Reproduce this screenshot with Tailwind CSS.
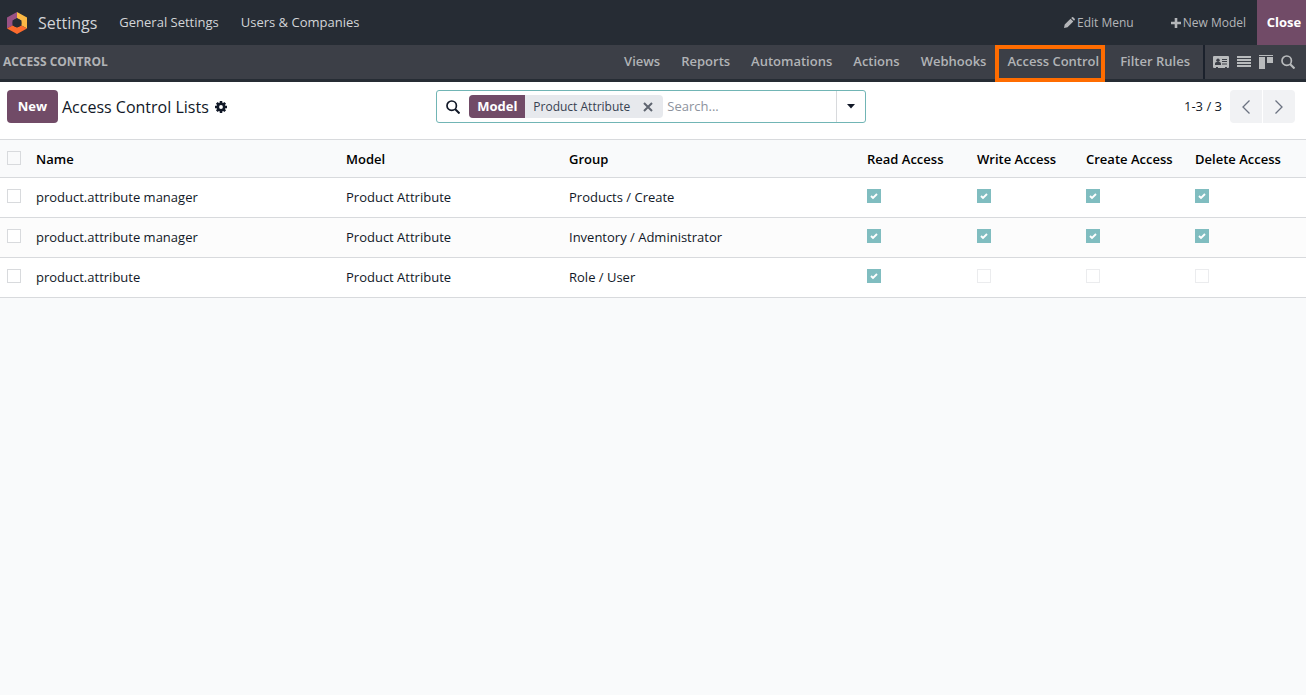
<!DOCTYPE html>
<html lang="en">
<head>
    <meta charset="UTF-8">
    <meta name="viewport" content="width=device-width, initial-scale=1.0">
    <title>Settings - Access Control Lists</title>
    <script src="https://cdn.jsdelivr.net/npm/@tailwindcss/browser@4"></script>
</head>
<body class="min-h-screen bg-[#f9fafb] font-['Segoe_UI','Open_Sans',sans-serif] text-[13px] text-[#111827]">
    <!-- Shared check mark -->
    <svg class="hidden">
        <symbol id="check" viewBox="0 0 14 14">
            <path d="M4 7l2 2 4-4" fill="none" stroke="#fff" stroke-width="1.9" />
        </symbol>
    </svg>

    <!-- Main navbar -->
    <nav class="flex h-[45px] items-center bg-[#262c34] text-[#d3d5d8]">
        <a href="#" class="flex items-center pl-[7px]">
            <svg class="h-[22px] w-5" viewBox="0 0 20 22">
                <path d="M10 0L0 5.500v11l5.500-3V8.500L10 6z" fill="#985184" />
                <path d="M10 0l10 5.500v11l-5.500-3V8.500L10 6z" fill="#fbb945" />
                <path d="M0 16.500l5.500-3L10 15.500l4.500-2 5.500 3L10 22z" fill="#fc6b2d" />
                <circle cx="10" cy="11" r="4.300" fill="#262c34" />
            </svg>
            <span class="ml-[11px] text-base">Settings</span>
        </a>
        <a href="#" class="ml-[22px]">General Settings</a>
        <a href="#" class="ml-[22px]">Users &amp; Companies</a>
        <div class="ml-auto flex h-full items-center text-xs text-[#b4b6b9]">
            <a href="#" class="flex items-center gap-[2px]">
                <svg class="size-[11px]" viewBox="0 0 11 11" fill="currentColor">
                    <path d="M0 11l.7-3.500L6.500 1.700l2.800 2.800-5.800 5.800zM7.200 1L8 .3q.6-.5 1.200 0l1.500 1.500q.5.600 0 1.200l-.7.800z" />
                </svg>
                Edit Menu
            </a>
            <a href="#" class="ml-[37px] flex items-center gap-[2px]">
                <svg class="size-[10px]" viewBox="0 0 10 10" fill="currentColor"><path d="M3.700 0h2.600v3.700H10v2.600H6.300V10H3.700V6.300H0V3.700h3.700z" /></svg>
                New Model
            </a>
            <button class="ml-[11px] h-full w-[49px] bg-[#714b67] pl-[5px] text-[13px] font-bold text-white">Close</button>
        </div>
    </nav>

    <!-- Studio bar -->
    <nav class="flex h-[37px] items-stretch border-b-[3px] border-[#262c34] bg-[#3c3f47] font-semibold text-[#b1b3b6]">
        <h2 class="self-center pl-[3px] text-xs font-bold">ACCESS CONTROL</h2>
        <div class="ml-auto flex items-center gap-[21px] pr-[13px]">
            <a href="#">Views</a>
            <a href="#">Reports</a>
            <a href="#">Automations</a>
            <a href="#">Actions</a>
            <a href="#">Webhooks</a>
            <a href="#" class="relative">
                Access Control
                <span class="absolute -top-[7px] -right-[6px] -bottom-[10px] -left-3 border-4 border-[#ff6c00]"></span>
            </a>
            <a href="#">Filter Rules</a>
        </div>
        <div class="flex items-center gap-2 border-l-2 border-[#1b212c] pr-[11px] pl-2">
            <button aria-label="Form">
                <svg class="h-3 w-4" viewBox="0 0 16 12">
                    <path d="M1 0h14q1 0 1 1v10q0 1-1 1h-1v-1h-2v1H5v-1H3v1H1q-1 0-1-1V1q0-1 1-1z" fill="#b9bbbd" />
                    <path d="M2 9V7.500Q2 6 3.500 6h3Q8 6 8 7.500V9zM9 3h5v1H9zM9 5h5v1H9zM9 7.500h5v1H9z" fill="#3c3f47" />
                    <circle cx="5" cy="4.200" r="1.700" fill="#3c3f47" />
                </svg>
            </button>
            <button aria-label="List">
                <svg class="h-3 w-[14px]" viewBox="0 0 14 12" fill="#b9bbbd"><path d="M0 0h14v2H0zM0 3h14v2H0zM0 6h14v2H0zM0 9h14v2H0z" /></svg>
            </button>
            <button aria-label="Kanban">
                <svg class="h-[14px] w-[14px]" viewBox="0 0 14 14" fill="#b9bbbd"><path d="M0 0h14v1H0zM0 2h6v12H0zM8 2h6v6H8z" /></svg>
            </button>
            <button aria-label="Search view">
                <svg class="size-[14px]" viewBox="0 0 14 14" fill="none" stroke="#b9bbbd" stroke-width="1.700"><circle cx="5.700" cy="5.700" r="4.700" /><path d="M9 9l4.500 4.500" stroke-width="2.200" /></svg>
            </button>
        </div>
    </nav>

    <!-- Control panel -->
    <header class="grid grid-cols-3 items-center border-b border-[#d8dadd] bg-white pt-2 pr-[11px] pb-4 pl-[7px]">
        <div class="flex items-center">
            <button class="h-[33px] w-[51px] rounded bg-[#714b67] font-bold text-white">New</button>
            <h1 class="ml-1 text-base">Access Control Lists</h1>
            <button class="ml-[6px]" aria-label="Actions">
                <svg class="size-3" viewBox="0 0 12 12">
                    <circle cx="6" cy="6" r="3.200" fill="none" stroke="#111827" stroke-width="2.600" />
                    <path d="M6 0v2.500M6 9.500V12M0 6h2.500M9.500 6H12M1.800 1.800l1.700 1.700M8.500 8.500l1.700 1.700M1.800 10.200l1.700-1.700M8.500 3.500l1.700-1.700" stroke="#111827" stroke-width="2.500" />
                </svg>
            </button>
        </div>
        <div class="flex h-[33px] items-center rounded-[3px] border border-[#71b5b5]">
            <svg class="ml-[9px] size-[14px] shrink-0" viewBox="0 0 14 14" fill="none" stroke="#111827" stroke-width="1.700"><circle cx="5.700" cy="5.700" r="4.700" /><path d="M9 9l4.500 4.500" stroke-width="2" /></svg>
            <div class="ml-[9px] flex h-[23px] shrink-0 items-center overflow-hidden rounded bg-[#e7e9ed]">
                <span class="flex h-full w-14 items-center justify-center bg-[#714b67] font-bold text-white">Model</span>
                <span class="ml-2 text-xs text-[#374151]">Product Attribute</span>
                <button class="mr-[10px] ml-[13px]" aria-label="Remove">
                    <svg class="size-[10px]" viewBox="0 0 10 10" stroke="#5f6570" stroke-width="2"><path d="M1 1l8 8M9 1L1 9" /></svg>
                </button>
            </div>
            <input type="text" aria-label="Search" placeholder="Search..." class="ml-1 min-w-0 flex-1 outline-none placeholder:text-[#8d939d]">
            <button class="flex h-full w-[29px] items-center justify-center border-l border-[#d8dadd]" aria-label="Toggle search panel">
                <svg class="h-[5px] w-2" viewBox="0 0 8 5"><path d="M0 0h8L4 4.500z" fill="#111827" /></svg>
            </button>
        </div>
        <div class="flex items-center justify-end gap-px">
            <span class="mr-[7px]">1-3 / 3</span>
            <button class="flex h-[33px] w-8 items-center justify-center rounded-l bg-[#f1f2f4]" aria-label="Previous">
                <svg class="h-[14px] w-2" viewBox="0 0 8 14" fill="none" stroke="#6b7280" stroke-width="1.300"><path d="M7.500.500L1 7l6.500 6.500" /></svg>
            </button>
            <button class="flex h-[33px] w-8 items-center justify-center rounded-r bg-[#f1f2f4]" aria-label="Next">
                <svg class="h-[14px] w-2" viewBox="0 0 8 14" fill="none" stroke="#6b7280" stroke-width="1.300"><path d="M.500.500L7 7 .500 13.500" /></svg>
            </button>
        </div>
    </header>

    <!-- Access rights list -->
    <table class="w-full table-fixed text-left">
        <colgroup>
            <col class="w-9">
            <col class="w-[310px]">
            <col class="w-[223px]">
            <col>
            <col class="w-[110px]">
            <col class="w-[109px]">
            <col class="w-[109px]">
            <col class="w-[111px]">
        </colgroup>
        <thead>
            <tr class="h-[37px] border-b border-[#d8dadd] text-black">
                <th class="pl-[7px]"><input type="checkbox" aria-label="Select all" class="block size-[14px] appearance-none border border-[#d8dadd]"></th>
                <th class="pt-[2px] font-semibold">Name</th>
                <th class="pt-[2px] font-semibold">Model</th>
                <th class="pt-[2px] font-semibold">Group</th>
                <th class="pt-[2px] font-semibold">Read Access</th>
                <th class="pt-[2px] font-semibold">Write Access</th>
                <th class="pt-[2px] font-semibold">Create Access</th>
                <th class="pt-[2px] font-semibold">Delete Access</th>
            </tr>
        </thead>
        <tbody id="rows"></tbody>
    </table>

    <script>
        const records = [
            { name: 'product.attribute manager', model: 'Product Attribute', group: 'Products / Create', access: [true, true, true, true] },
            { name: 'product.attribute manager', model: 'Product Attribute', group: 'Inventory / Administrator', access: [true, true, true, true] },
            { name: 'product.attribute', model: 'Product Attribute', group: 'Role / User', access: [true, false, false, false] },
        ];
        const rights = ['Read', 'Write', 'Create', 'Delete'];

        document.getElementById('rows').innerHTML = records.map(r => `
            <tr class="h-10 border-b border-[#d8dadd] bg-white even:bg-[#fcfcfc]">
                <td class="pb-[3px] pl-[7px]"><input type="checkbox" aria-label="Select record" class="block size-[14px] appearance-none border border-[#d8dadd] bg-white"></td>
                <td class="pt-[2px]">${r.name}</td>
                <td class="pt-[2px]">${r.model}</td>
                <td class="pt-[2px]">${r.group}</td>
                ${r.access.map((on, i) => `
                    <td class="pb-[3px]">
                        <label class="relative block size-[14px]">
                            <input type="checkbox" aria-label="${rights[i]} access" disabled ${on ? 'checked' : ''} class="peer block size-[14px] appearance-none border border-[#ebecee] bg-white checked:border-[#80bdc0] checked:bg-[#80bdc0]">
                            <svg class="absolute inset-0 hidden size-[14px] peer-checked:block"><use href="#check" /></svg>
                        </label>
                    </td>
                `).join('')}
            </tr>
        `).join('');
    </script>
</body>
</html>
